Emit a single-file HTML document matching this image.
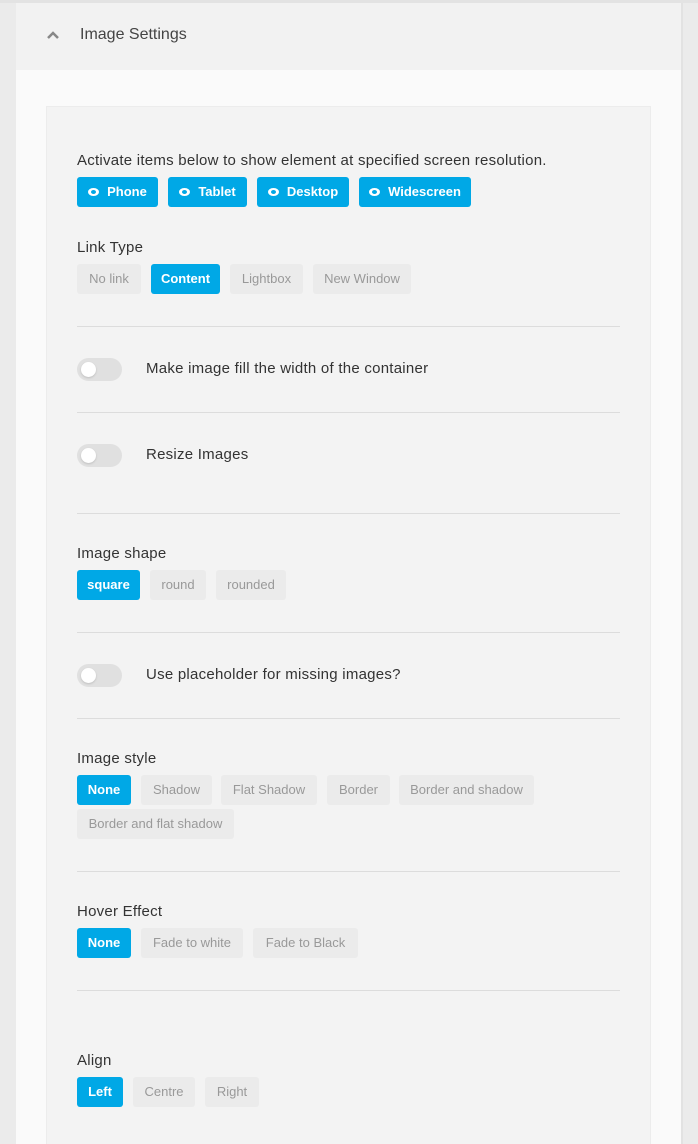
<!DOCTYPE html>
<html style="overflow:hidden;height:1144px"><head><meta charset="utf-8"><style>
*{margin:0;padding:0;box-sizing:border-box}
body{width:698px;height:1144px;overflow:hidden;background:#ebebeb;font-family:"Liberation Sans",Arial,sans-serif;position:relative}
.topline{position:absolute;left:0;top:0;width:698px;height:3px;background:#e3e3e3}
.panel{position:absolute;left:16px;top:3px;width:667px;bottom:0;background:#fafafa;border-right:2px solid #e2e2e2}
.head{position:absolute;left:16px;top:3px;width:665px;height:67px;background:#f2f2f2}
.inner{position:absolute;left:46px;top:106px;width:605px;height:1038px;background:#f3f3f3;border:1px solid #ececec;border-bottom:none}
.a{position:absolute}
.t{position:absolute;font-size:15px;color:#333;white-space:nowrap;line-height:18px;letter-spacing:0.25px}
.b{position:absolute;height:30px;border-radius:3px;font-size:13px;line-height:30px;text-align:center;color:#999;background:#ebebeb;white-space:nowrap}
.on{background:#00a8e6;color:#fff;font-weight:bold}
.hr{position:absolute;left:77px;width:543px;height:1px;background:#dcdcdc}
.tg{position:absolute;left:77px;width:45px;height:23px;border-radius:12px;background:#e0e0e0}
.tg::after{content:"";position:absolute;left:4px;top:4px;width:15px;height:15px;border-radius:50%;background:#fff;box-shadow:0 1px 2px rgba(0,0,0,.15)}
.eye{display:inline-block;width:11px;height:8px;border-radius:50%;background:#fff;margin-right:8px;position:relative;vertical-align:-0px}
.eye::after{content:"";position:absolute;left:3px;top:2px;width:5px;height:4px;border-radius:50%;background:#00a8e6}
</style></head><body>
<div class="topline"></div>
<div class="panel"></div>
<div class="head"></div>
<svg class="a" style="left:45px;top:29px" width="16" height="12" viewBox="0 0 16 12"><path d="M3 9 L8 4 L13 9" stroke="#888" stroke-width="2.5" fill="none"/></svg>
<div class="t" style="left:80px;top:26px;font-size:16px;color:#444;letter-spacing:0">Image Settings</div>
<div class="inner"></div>

<div class="t" style="left:77px;top:152px">Activate items below to show element at specified screen resolution.</div>
<div class="b on" style="left:77px;top:177px;width:81px"><span class="eye"></span>Phone</div>
<div class="b on" style="left:168px;top:177px;width:79px"><span class="eye"></span>Tablet</div>
<div class="b on" style="left:257px;top:177px;width:92px"><span class="eye"></span>Desktop</div>
<div class="b on" style="left:359px;top:177px;width:112px"><span class="eye"></span>Widescreen</div>

<div class="t" style="left:77px;top:239px">Link Type</div>
<div class="b" style="left:77px;top:264px;width:64px">No link</div>
<div class="b on" style="left:151px;top:264px;width:69px">Content</div>
<div class="b" style="left:230px;top:264px;width:73px">Lightbox</div>
<div class="b" style="left:313px;top:264px;width:98px">New Window</div>

<div class="hr" style="top:326px"></div>
<div class="tg" style="top:358px"></div>
<div class="t" style="left:146px;top:360px">Make image fill the width of the container</div>
<div class="hr" style="top:412px"></div>
<div class="tg" style="top:444px"></div>
<div class="t" style="left:146px;top:446px">Resize Images</div>
<div class="hr" style="top:513px"></div>

<div class="t" style="left:77px;top:545px">Image shape</div>
<div class="b on" style="left:77px;top:570px;width:63px">square</div>
<div class="b" style="left:150px;top:570px;width:56px">round</div>
<div class="b" style="left:216px;top:570px;width:70px">rounded</div>
<div class="hr" style="top:632px"></div>
<div class="tg" style="top:664px"></div>
<div class="t" style="left:146px;top:666px">Use placeholder for missing images?</div>
<div class="hr" style="top:718px"></div>

<div class="t" style="left:77px;top:750px">Image style</div>
<div class="b on" style="left:77px;top:775px;width:54px">None</div>
<div class="b" style="left:141px;top:775px;width:71px">Shadow</div>
<div class="b" style="left:221px;top:775px;width:96px">Flat Shadow</div>
<div class="b" style="left:327px;top:775px;width:63px">Border</div>
<div class="b" style="left:399px;top:775px;width:135px">Border and shadow</div>
<div class="b" style="left:77px;top:809px;width:157px">Border and flat shadow</div>
<div class="hr" style="top:871px"></div>

<div class="t" style="left:77px;top:903px">Hover Effect</div>
<div class="b on" style="left:77px;top:928px;width:54px">None</div>
<div class="b" style="left:141px;top:928px;width:102px">Fade to white</div>
<div class="b" style="left:253px;top:928px;width:105px">Fade to Black</div>
<div class="hr" style="top:990px"></div>

<div class="t" style="left:77px;top:1052px">Align</div>
<div class="b on" style="left:77px;top:1077px;width:46px">Left</div>
<div class="b" style="left:133px;top:1077px;width:62px">Centre</div>
<div class="b" style="left:205px;top:1077px;width:54px">Right</div>
</body></html>
